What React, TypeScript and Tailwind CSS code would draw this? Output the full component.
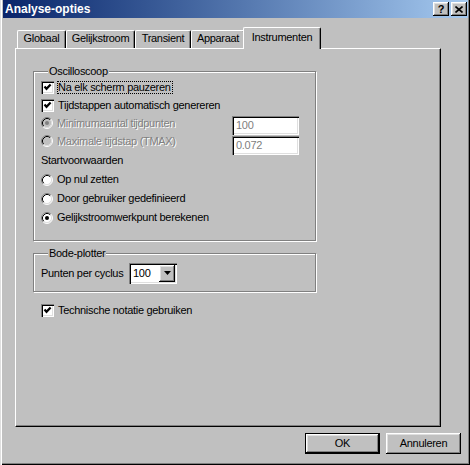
import React from "react";

const sunken =
  "shadow-[inset_1px_1px_0_#808080,inset_2px_2px_0_#000,inset_-1px_-1px_0_#fff,inset_-2px_-2px_0_#dfdfdf]";
const raised =
  "shadow-[inset_-1px_-1px_0_#000,inset_1px_1px_0_#fff,inset_-2px_-2px_0_#808080,inset_2px_2px_0_#dfdfdf]";
const disabledText = "text-[#808080] [text-shadow:1px_1px_0_#fff]";

const Check = ({ checked }: { checked: boolean }) => (
  <span className={`w-[13px] h-[13px] bg-white shrink-0 ${sunken} flex`}>
    {checked && (
      <svg width="13" height="13" viewBox="0 0 13 13">
        <polyline points="3.5,5.5 5.5,7.8 9.6,3.4" fill="none" stroke="#000" strokeWidth="2.2" />
      </svg>
    )}
  </span>
);

const Radio = ({ on, disabled }: { on?: boolean; disabled?: boolean }) => (
  <svg width="12" height="12" viewBox="0 0 12 12" className="shrink-0">
    <circle cx="6" cy="6" r="5" fill={disabled ? "#c0c0c0" : "#fff"} />
    <path d="M2.11 9.89 A5.5 5.5 0 0 1 9.89 2.11" fill="none" stroke="#808080" />
    <path d="M9.89 2.11 A5.5 5.5 0 0 1 2.11 9.89" fill="none" stroke="#fff" />
    <path d="M2.82 9.18 A4.5 4.5 0 0 1 9.18 2.82" fill="none" stroke="#000" />
    <path d="M9.18 2.82 A4.5 4.5 0 0 1 2.82 9.18" fill="none" stroke="#dfdfdf" />
    {on && <circle cx="6" cy="6" r="2" fill={disabled ? "#808080" : "#000"} />}
  </svg>
);

const Tab = ({ label, w, active }: { label: string; w: string; active?: boolean }) =>
  active ? (
    <div
      className={`${w} h-[22px] -mb-[1px] -ml-[2px] relative z-10 bg-[#c0c0c0] border-l border-t border-white border-r border-r-black rounded-tl-[2px] rounded-tr-[2px] shadow-[inset_-1px_0_0_#808080] flex justify-center pt-[3px]`}
    >
      {label}
    </div>
  ) : (
    <div
      className={`${w} h-[18px] bg-[#c0c0c0] border-l border-t border-white border-r border-r-black rounded-tl-[2px] rounded-tr-[2px] shadow-[inset_-1px_0_0_#808080] flex justify-center pt-[1px]`}
    >
      {label}
    </div>
  );

const Group = ({ title, className, children }: { title: string; className: string; children: React.ReactNode }) => (
  <fieldset
    className={`w-[283px] border border-[#808080] shadow-[inset_1px_1px_0_#fff,1px_1px_0_#fff] px-[7px] ${className}`}
  >
    <legend className="ml-[7px] px-[1px] leading-[13px] bg-[#c0c0c0]">{title}</legend>
    {children}
  </fieldset>
);

export default function App() {
  return (
    <div className="w-[470px] h-[465px] bg-[#c0c0c0] flex flex-col pl-[3px] pr-[2px] text-[11px] leading-[13px] tracking-[-0.3px] text-black font-['Liberation_Sans',Arial,sans-serif] shadow-[inset_1px_0_0_#dfdfdf,inset_2px_0_0_#fff,inset_-1px_-1px_0_#000,inset_-2px_-2px_0_#808080]">
      {/* title bar */}
      <div className="h-[18px] bg-gradient-to-r from-[#0a246a] to-[#a6caf0] flex items-center justify-between pl-[2px] pr-[1px]">
        <span className="text-white font-bold text-[12px] tracking-normal">Analyse-opties</span>
        <div className="flex gap-[2px]">
          <div className={`w-[16px] h-[14px] bg-[#c0c0c0] ${raised} flex items-center justify-center font-bold text-[11px]`}>?</div>
          <div className={`w-[16px] h-[14px] bg-[#c0c0c0] ${raised} flex items-center justify-center`}>
            <svg width="8" height="7" viewBox="0 0 8 7">
              <path d="M0.5 0.5 L7.5 6.5 M7.5 0.5 L0.5 6.5" stroke="#000" strokeWidth="1.6" />
            </svg>
          </div>
        </div>
      </div>

      {/* tabs */}
      <div className="mt-[9px] ml-[14px] h-[21px] flex items-end">
        <Tab label="Globaal" w="w-[49px]" />
        <Tab label="Gelijkstroom" w="w-[69px]" />
        <Tab label="Transient" w="w-[56px]" />
        <Tab label="Apparaat" w="w-[54px]" />
        <Tab label="Instrumenten" w="w-[78px]" active />
      </div>

      {/* panel */}
      <div className="ml-[12px] w-[426px] h-[379px] border-l border-t border-white border-r border-b border-r-black border-b-black shadow-[inset_-1px_-1px_0_#808080] pt-[16px] pl-[17px] flex flex-col">
        <Group title="Oscilloscoop" className="pb-[13px]">
          <div className="h-[18px] flex items-center gap-[3px]">
            <Check checked />
            <span className="px-[1px] outline outline-1 outline-dotted outline-black -outline-offset-1 leading-[12px] py-[0.5px] pr-[2px]">
              Na elk scherm pauzeren
            </span>
          </div>
          <div className="h-[18px] flex items-center gap-[4px]">
            <Check checked />
            <span>Tijdstappen automatisch genereren</span>
          </div>
          <div className="h-[36px] flex items-start">
            <div className="w-[191px] flex flex-col">
              <div className="h-[18px] flex items-center gap-[4px]">
                <Radio on disabled />
                <span className={disabledText}>Minimumaantal tijdpunten</span>
              </div>
              <div className="h-[18px] flex items-center gap-[4px]">
                <Radio disabled />
                <span className={disabledText}>Maximale tijdstap (TMAX)</span>
              </div>
            </div>
            <div className="flex flex-col gap-[1px] mt-[2px]">
              <div className={`w-[67px] h-[19px] bg-white ${sunken} pl-[4px] flex items-center text-[#808080]`}>100</div>
              <div className={`w-[67px] h-[19px] bg-white ${sunken} pl-[4px] flex items-center text-[#808080]`}>0.072</div>
            </div>
          </div>
          <div className="h-[20px] flex items-center">Startvoorwaarden</div>
          <div className="h-[19px] flex items-center gap-[4px]">
            <Radio />
            <span>Op nul zetten</span>
          </div>
          <div className="h-[19px] flex items-center gap-[4px]">
            <Radio />
            <span>Door gebruiker gedefinieerd</span>
          </div>
          <div className="h-[19px] flex items-center gap-[4px]">
            <Radio on />
            <span>Gelijkstroomwerkpunt berekenen</span>
          </div>
        </Group>

        <Group title="Bode-plotter" className="mt-[6px] pt-[2px] pb-[7px]">
          <div className="h-[22px] flex items-center">
            <span className="w-[88px]">Punten per cyclus</span>
            <div className={`w-[48px] h-[21px] bg-white ${sunken} flex items-center justify-between pl-[4px] pr-[2px]`}>
              <span>100</span>
              <div className={`w-[16px] h-[17px] bg-[#c0c0c0] ${raised} flex items-center justify-center`}>
                <svg width="7" height="4" viewBox="0 0 7 4">
                  <path d="M0 0 H7 L3.5 4 Z" fill="#000" />
                </svg>
              </div>
            </div>
          </div>
        </Group>

        <div className="mt-[9px] ml-[8px] h-[19px] flex items-center gap-[4px]">
          <Check checked />
          <span>Technische notatie gebruiken</span>
        </div>
      </div>

      {/* buttons */}
      <div className="mt-[6px] pr-[7px] flex justify-end gap-[6px]">
        <div className="w-[75px] h-[21px] border border-black">
          <div className={`w-full h-full ${raised} flex items-center justify-center`}>OK</div>
        </div>
        <div className={`w-[75px] h-[21px] ${raised} flex items-center justify-center`}>Annuleren</div>
      </div>
    </div>
  );
}
